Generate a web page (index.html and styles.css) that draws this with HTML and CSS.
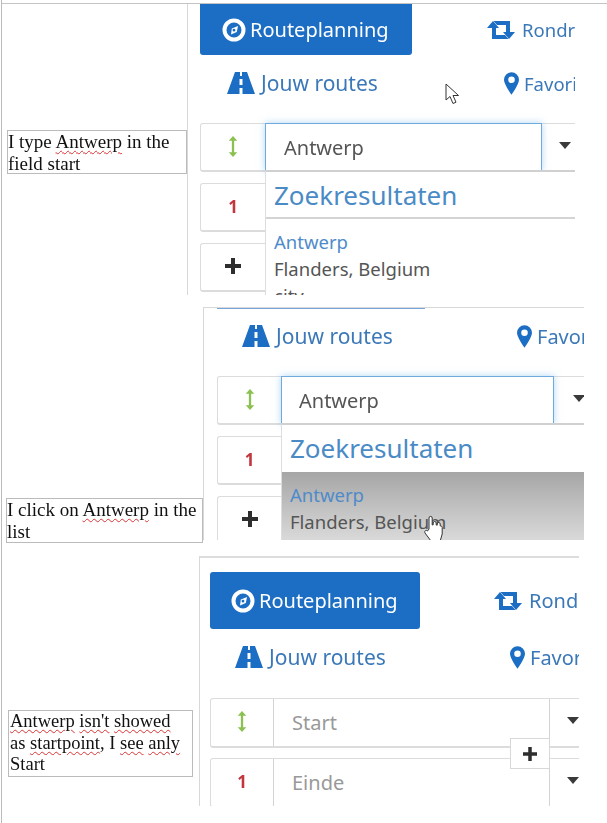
FILE: index.html
```html
<!DOCTYPE html>
<html lang="nl">
<head>
    <meta charset="UTF-8">
    <title>Antwerp as start</title>
    <link rel="stylesheet" href="styles.css">
</head>
<body>

<svg class="sprite" xmlns="http://www.w3.org/2000/svg">
    <symbol id="i-compass" viewBox="0 0 24 24">
        <circle cx="12" cy="12" r="9.500" fill="none" stroke="#fff" stroke-width="4"/>
        <path fill="#fff" fill-rule="evenodd" d="M16 8 14.800 14 9 16.500 9.800 10.500zM12 10.800a1.400 1.400 0 1 0 0 2.800 1.400 1.400 0 0 0 0-2.800z"/>
    </symbol>
    <symbol id="i-retweet" viewBox="0 0 28 18">
        <path d="M0 7 6 0l6 7H9v7h9l3.500 4H5V7z"/>
        <path d="M28 11l-6 7-6-7h3V4H10L6.500 0H23v11z"/>
    </symbol>
    <symbol id="i-road" viewBox="0 0 28 22">
        <path fill-rule="evenodd" d="M8 0h5v4h2V0h5l8 22H15.500v-6h-3v6H0zM12.500 7v6h3V7z"/>
    </symbol>
    <symbol id="i-pin" viewBox="0 0 16 24">
        <path fill-rule="evenodd" d="M8 0a8 8 0 0 0-8 8c0 5 8 16 8 16s8-11 8-16a8 8 0 0 0-8-8zm0 4.500a3.500 3.500 0 1 1 0 7 3.500 3.500 0 0 1 0-7z"/>
    </symbol>
    <symbol id="i-updown" viewBox="0 0 10 22">
        <path d="M5 0 9.500 5H6.200v12h3.300L5 22 .5 17h3.300V5H.5z"/>
    </symbol>
    <symbol id="i-plus" viewBox="0 0 16 16">
        <path d="M6 0h4v6h6v4h-6v6H6v-6H0V6h6z"/>
    </symbol>
    <symbol id="i-caret" viewBox="0 0 12 7">
        <path d="M0 0h12L6 7z"/>
    </symbol>
</svg>

<div class="page">

    <section class="capture capture-first">
        <p class="note note-first">I type <span class="typo">Antwerp</span> in the field start</p>
        <div class="panel panel-first">
            <div class="nav nav-tabs">
                <a class="tab tab-active"><svg class="icon icon-compass"><use href="#i-compass"/></svg>Routeplanning</a>
                <a class="tab tab-next"><svg class="icon icon-retweet"><use href="#i-retweet"/></svg>Rondr</a>
            </div>
            <div class="nav nav-links">
                <a class="tab tab-routes"><svg class="icon icon-road"><use href="#i-road"/></svg>Jouw routes</a>
                <a class="tab tab-fav"><svg class="icon icon-pin"><use href="#i-pin"/></svg>Favori</a>
            </div>
            <div class="route-row">
                <div class="addon"><svg class="icon icon-updown"><use href="#i-updown"/></svg></div>
                <div class="field field-focus">
                    Antwerp
                    <div class="results">
                        <div class="results-title">Zoekresultaten</div>
                        <div class="result-item">
                            <div class="result-name">Antwerp</div>
                            <div>Flanders, Belgium</div>
                            <div>city</div>
                        </div>
                    </div>
                </div>
                <div class="toggle"><svg class="icon icon-caret"><use href="#i-caret"/></svg></div>
            </div>
            <div class="route-row">
                <div class="addon addon-num">1</div>
            </div>
            <div class="route-row">
                <div class="addon"><svg class="icon icon-plus"><use href="#i-plus"/></svg></div>
            </div>
            <svg class="cursor cursor-arrow" viewBox="0 0 15 22">
                <path d="M1 1v16l4-3.500 3 7 3-1.300-3-6.700h5.500z" fill="#fff" stroke="#333" stroke-width="1"/>
            </svg>
        </div>
    </section>

    <section class="capture capture-second">
        <p class="note note-second">I click on <span class="typo">Antwerp</span> in the list</p>
        <div class="panel panel-second">
            <div class="tab-cut"></div>
            <div class="nav nav-links">
                <a class="tab tab-routes"><svg class="icon icon-road"><use href="#i-road"/></svg>Jouw routes</a>
                <a class="tab tab-fav"><svg class="icon icon-pin"><use href="#i-pin"/></svg>Favor</a>
            </div>
            <div class="route-row">
                <div class="addon"><svg class="icon icon-updown"><use href="#i-updown"/></svg></div>
                <div class="field field-focus">
                    Antwerp
                    <div class="results">
                        <div class="results-title results-title-flat">Zoekresultaten</div>
                        <div class="result-item result-hover">
                            <div class="result-name">Antwerp</div>
                            <div>Flanders, Belgium</div>
                        </div>
                    </div>
                </div>
                <div class="toggle"><svg class="icon icon-caret"><use href="#i-caret"/></svg></div>
            </div>
            <div class="route-row">
                <div class="addon addon-num">1</div>
            </div>
            <div class="route-row">
                <div class="addon"><svg class="icon icon-plus"><use href="#i-plus"/></svg></div>
            </div>
            <svg class="cursor cursor-hand" viewBox="0 0 20 28">
                <path d="M6 14V3a1.600 1.600 0 0 1 3.200 0v7l1-.2V8a1.500 1.500 0 0 1 3 0v2l1 .2V9a1.500 1.500 0 0 1 3 0v2a1.500 1.500 0 0 1 2 1.500V19l-2 7H8l-6-8c-1-2 1-3.500 2.500-2z" fill="#fff" stroke="#333" stroke-width="1"/>
            </svg>
        </div>
    </section>

    <section class="capture capture-third">
        <p class="note note-third"><span class="typo">Antwerp</span> <span class="typo">isn't</span> <span class="typo">showed</span> as <span class="typo">startpoint</span>, I <span class="typo">see</span> <span class="typo">anly</span> Start</p>
        <div class="panel panel-third">
            <div class="nav nav-tabs">
                <a class="tab tab-active"><svg class="icon icon-compass"><use href="#i-compass"/></svg>Routeplanning</a>
                <a class="tab tab-next"><svg class="icon icon-retweet"><use href="#i-retweet"/></svg>Rondr</a>
            </div>
            <div class="nav nav-links">
                <a class="tab tab-routes"><svg class="icon icon-road"><use href="#i-road"/></svg>Jouw routes</a>
                <a class="tab tab-fav"><svg class="icon icon-pin"><use href="#i-pin"/></svg>Favor</a>
            </div>
            <div class="route-row">
                <div class="addon"><svg class="icon icon-updown"><use href="#i-updown"/></svg></div>
                <div class="field field-empty">Start</div>
                <div class="toggle"><svg class="icon icon-caret"><use href="#i-caret"/></svg></div>
            </div>
            <div class="route-row">
                <div class="addon addon-num">1</div>
                <div class="field field-empty">Einde</div>
                <div class="toggle"><svg class="icon icon-caret"><use href="#i-caret"/></svg></div>
                <div class="add-stop"><svg class="icon icon-plus icon-plus-small"><use href="#i-plus"/></svg></div>
            </div>
        </div>
    </section>

</div>

</body>
</html>
```

FILE: styles.css
```css
body {
    margin: 0;
    background-color: #fff;
    font-family: "Noto Sans", sans-serif;
    color: #555;
}
.sprite {
    display: none;
}
.page {
    margin-left: 1px;
    padding-top: 3px;
    box-sizing: border-box;
    height: 100vh;
    border-left: 1px solid #bbb;
    overflow: hidden;
    filter: blur(0.4px); /* the pasted screenshots are soft */
}

/* one pasted screenshot with its caption */
.capture {
    display: flex;
    align-items: flex-start;
}
.capture-first {
    height: 291px;
    border-top: 1px solid #c4c4c4;
}
.capture-second {
    height: 236px;
    margin-top: 12px;
}
.capture-third {
    height: 250px;
    margin-top: 13px;
}

.note {
    margin: 0;
    box-sizing: border-box;
    border: 1px solid #bbb;
    flex: none;
    font-family: "Liberation Serif", serif;
    font-size: 19px;
    line-height: 21.500px;
    color: #111;
}
.note-first {
    width: 180px;
    height: 44px;
    margin: 126px 0 0 5px;
}
.note-second {
    width: 197px;
    height: 45px;
    margin: 191px 0 0 4px;
}
.note-third {
    width: 185px;
    height: 67px;
    margin: 154px 0 0 6px;
    padding: 0 6px 0 1px;
    font-size: 18.500px;
}
.typo {
    text-decoration: underline wavy #d33;
    text-decoration-thickness: 1px;
    text-underline-offset: 2px;
}

.panel {
    position: relative;
    flex: none;
    box-sizing: border-box;
    height: 100%;
    overflow: hidden;
    border-left: 1px solid #d8d8d8;
}
.panel-first {
    width: 388px;
    padding-left: 12px;
}
.panel-second {
    width: 381px;
    height: 233px;
    padding-left: 13px;
    border-top: 1px solid #d8d8d8;
}
.panel-third {
    width: 380px;
    margin-left: 6px;
    padding: 14px 0 0 10px;
    border-top: 2px solid #ddd;
}

.nav {
    display: grid;
    grid-template-columns: 284px 1fr;
    align-items: center;
    white-space: nowrap;
}
.panel-first .nav {
    grid-template-columns: 287px 1fr;
}
.nav-tabs {
    height: 57px;
}
.panel-first .nav-tabs {
    height: 51px;
}
.nav-links {
    height: 56px;
    margin-bottom: 13px;
}
.panel-first .nav-links {
    margin-bottom: 12px;
}
.panel-second .nav-links {
    height: 54px;
}
.tab {
    display: flex;
    align-items: center;
    font-size: 20px;
    color: #3b78b8;
}
.tab-routes {
    padding-left: 25px;
    font-size: 21px;
}
.panel-first .tab-routes {
    padding-left: 27px;
}
.tab-fav {
    padding-left: 16px;
}
.panel-first .tab-fav {
    padding-left: 17px;
}
.panel-first .tab-fav,
.panel-first .tab-next {
    font-size: 18.500px;
}
.tab-active {
    box-sizing: border-box;
    width: 210px;
    height: 100%;
    padding-left: 21px;
    background-color: #1c6dc4;
    border-radius: 3px;
    color: #fff;
}
.panel-first .tab-active {
    width: 212px;
    padding-left: 22px;
    border-radius: 0 0 3px 3px;
}
.tab-cut {
    width: 208px;
    height: 1px;
    background-color: #7aa5d8;
}

.icon {
    flex: none;
    fill: currentColor;
}
.icon-compass {
    width: 24px;
    height: 24px;
    margin-right: 4px;
}
.icon-retweet {
    width: 28px;
    height: 18px;
    margin-right: 7px;
    fill: #1c6dc4;
}
.icon-road {
    width: 28px;
    height: 22px;
    margin-right: 6px;
    fill: #1c6dc4;
}
.icon-pin {
    width: 15px;
    height: 23px;
    margin-right: 5px;
    fill: #1c6dc4;
}
.icon-updown {
    width: 10px;
    height: 21px;
    fill: #8cc152;
}
.icon-plus {
    width: 16px;
    height: 16px;
    fill: #2e2e2e;
}
.icon-plus-small {
    width: 14px;
    height: 14px;
}
.icon-caret {
    width: 12px;
    height: 7px;
    fill: #3a3a3a;
}

.route-row {
    position: relative;
    display: flex;
    width: 400px;
    height: 49px;
    margin-bottom: 11px;
    box-sizing: border-box;
    border: 1px solid #dcdcdc;
    border-radius: 3px 0 0 3px;
    border-bottom-width: 2px;
    font-size: 20px;
}
.panel-third .route-row {
    height: 50px;
    margin-bottom: 10px;
}
.addon {
    flex: none;
    display: flex;
    align-items: center;
    justify-content: center;
    box-sizing: border-box;
    width: 64px;
    margin-top: -2px;
}
.panel-second .addon {
    width: 63px;
}
.panel-third .addon {
    width: 62px;
}
.addon-num {
    font-size: 17px;
    font-weight: 700;
    color: #c2363d;
}
.panel-first .route-row + .route-row,
.panel-second .route-row + .route-row {
    border-right: 0;
    width: 65px;
}
.field {
    position: relative;
    flex: none;
    box-sizing: border-box;
    display: flex;
    align-items: center;
    width: 277px;
    padding-left: 18px;
    background-color: #fff;
}
.panel-second .field {
    width: 273px;
    padding-left: 17px;
}
.field-focus {
    margin: -1px 0 -1px 0;
    border: 1px solid #6fa9dd;
    box-shadow: 0 0 7px rgba(102, 175, 233, 0.5);
    color: #555;
}
.field-empty {
    border-left: 1px solid #d4d4d4;
    border-right: 1px solid #d4d4d4;
    color: #999;
}
.toggle {
    flex: none;
    display: flex;
    align-items: center;
    justify-content: center;
    width: 46px;
    margin-top: -4px;
}
.panel-second .toggle {
    width: 50px;
}
.add-stop {
    position: absolute;
    top: -21px;
    left: 299px;
    display: flex;
    align-items: center;
    justify-content: center;
    box-sizing: border-box;
    width: 40px;
    height: 31px;
    background-color: #fff;
    border: 1px solid #d8d8d8;
}

/* search results dropdown under the focused field */
.results {
    position: absolute;
    top: 100%;
    left: -1px;
    z-index: 2;
    width: 400px;
    background-color: #fff;
    border-left: 1px solid #ddd;
    border-top: 2px solid #d0d0d0;
}
.results-title {
    box-sizing: border-box;
    height: 47px;
    padding: 5px 0 0 8px;
    border-bottom: 2px solid #d4d4d4;
    font-size: 26px;
    line-height: 36px;
    color: #4a8bc6;
}
.results-title-flat {
    border-bottom: 0;
}
.result-item {
    padding: 9px 0 0 8px;
    font-size: 18.500px;
    line-height: 27px;
    height: 90px;
    color: #555;
}
.result-name {
    color: #4f8bc9;
}
.result-hover {
    background: linear-gradient(#a6a6a6, #dedede 75%);
}

.cursor {
    position: absolute;
    z-index: 3;
}
.cursor-arrow {
    top: 79px;
    left: 257px;
    width: 15px;
    height: 22px;
}
.cursor-hand {
    top: 207px;
    left: 219px;
    width: 20px;
    height: 28px;
}
```
